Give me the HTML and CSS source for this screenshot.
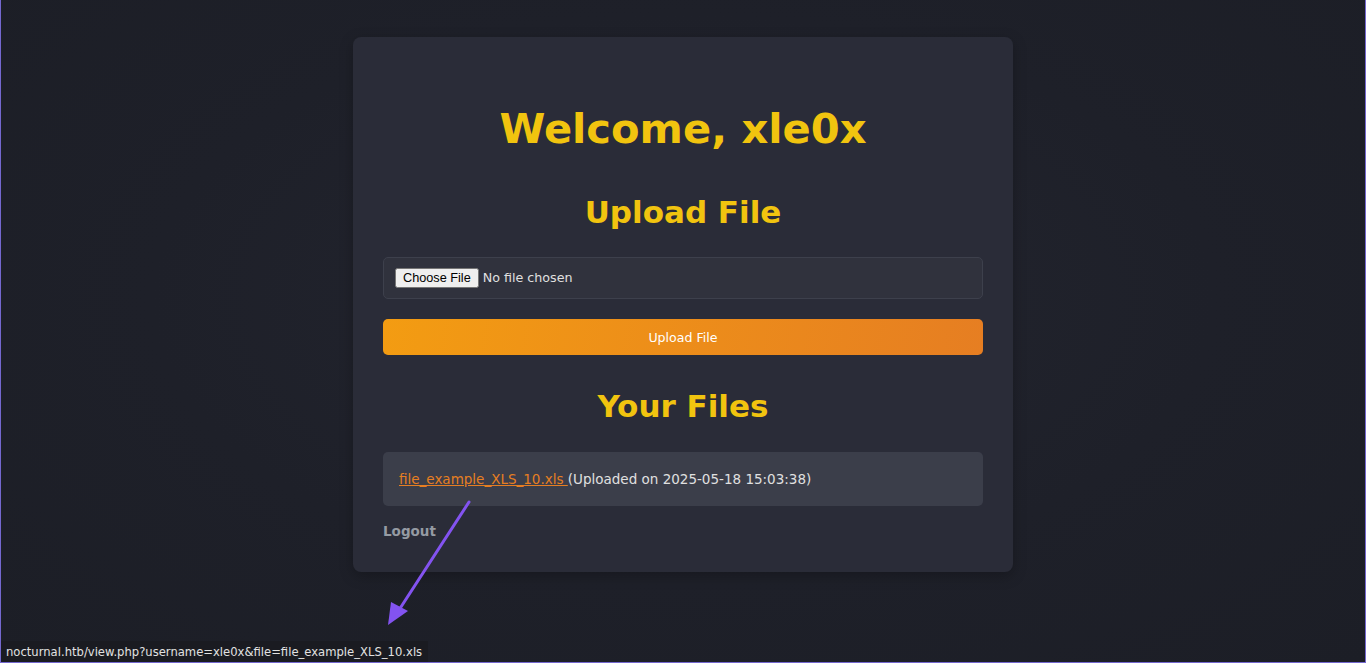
FILE: index.html
```html
<!DOCTYPE html>
<html lang="en">
<head>
<meta charset="utf-8">
<title>Dashboard</title>
<link rel="stylesheet" href="styles.css">
</head>
<body>
<main class="card">
  <h1 class="title">Welcome, xle0x</h1>
  <h2 class="section-title">Upload File</h2>
  <form class="upload-form">
    <div class="file-box"><input class="file-input" type="file" name="fileToUpload"></div>
    <button class="upload-btn" type="button">Upload File</button>
  </form>
  <h2 class="section-title files-title">Your Files</h2>
  <ul class="file-list">
    <li class="file-item"><a class="file-link" href="#">file_example_XLS_10.xls </a>(Uploaded on 2025-05-18 15:03:38)</li>
  </ul>
  <a class="logout" href="#">Logout</a>
</main>
<div class="status-bar">nocturnal.htb/view.php?username=xle0x&amp;file=file_example_XLS_10.xls</div>
<svg class="annotation" width="120" height="140" viewBox="0 0 120 140">
  <line x1="100" y1="2" x2="30" y2="110" stroke="#8353f0" stroke-width="3" stroke-linecap="round"/>
  <polygon points="19,125 22,102 39,111" fill="#8353f0"/>
</svg>
<div class="frame"></div>
</body>
</html>
```

FILE: styles.css
```css
html, body {
  margin: 0;
  padding: 0;
  height: 100%;
}
body {
  background: radial-gradient(ellipse at 50% 45%, #23252f 0%, #1e2029 55%, #1c1e26 100%);
  font-family: "DejaVu Sans", Verdana, sans-serif;
  color: #e0e0e0;
  overflow: hidden;
}
.card {
  width: 600px;
  margin: 37px auto 0;
  padding: 30px 30px 32px;
  background: #2a2c38;
  border-radius: 8px;
  box-shadow: 0 4px 14px rgba(0, 0, 0, 0.25);
}
.title {
  margin: 37px 0 0;
  font-size: 41.6px;
  line-height: 49px;
  font-weight: bold;
  color: #f1c40f;
  text-align: center;
}
.section-title {
  margin: 41px 0 0;
  font-size: 31px;
  line-height: 36px;
  font-weight: bold;
  color: #f1c40f;
  text-align: center;
}
.upload-form {
  margin: 27px 0 0;
  display: flex;
  flex-direction: column;
  gap: 20px;
}
.file-box {
  height: 40px;
  padding: 0 11px;
  display: flex;
  align-items: center;
  background: #30323d;
  border: 1px solid #3d404c;
  border-radius: 5px;
}
.file-input {
  font-family: "DejaVu Sans", sans-serif;
  font-size: 12.7px;
  color: #e0e0e0;
}
.upload-btn {
  height: 36px;
  border: none;
  border-radius: 5px;
  background: linear-gradient(100deg, #f39c12 0%, #e67e22 100%);
  color: #ffffff;
  font-family: "DejaVu Sans", sans-serif;
  font-size: 12.6px;
}
.files-title {
  margin-top: 33px;
}
.file-list {
  list-style: none;
  margin: 28px 0 0;
  padding: 0;
}
.file-item {
  height: 54px;
  padding: 0 16px;
  display: flex;
  align-items: center;
  background: #3b3e4a;
  border-radius: 5px;
  font-size: 13.5px;
  color: #e0e0e0;
  white-space: pre;
}
.file-link {
  color: #e67e22;
  text-decoration: underline;
}
.logout {
  display: inline-block;
  margin-top: 17px;
  font-size: 13.5px;
  line-height: 17px;
  font-weight: bold;
  color: #959ba3;
  text-decoration: none;
}
.status-bar {
  position: fixed;
  left: 0;
  bottom: 0;
  height: 22px;
  padding: 0 6px;
  display: flex;
  align-items: center;
  background: #1a1b21;
  color: #e2e2e2;
  font-size: 11.6px;
}
.annotation {
  position: absolute;
  left: 369px;
  top: 500px;
}
.frame {
  position: fixed;
  inset: 0;
  border: 1px solid #7468cf;
  border-top: none;
  pointer-events: none;
}
```
